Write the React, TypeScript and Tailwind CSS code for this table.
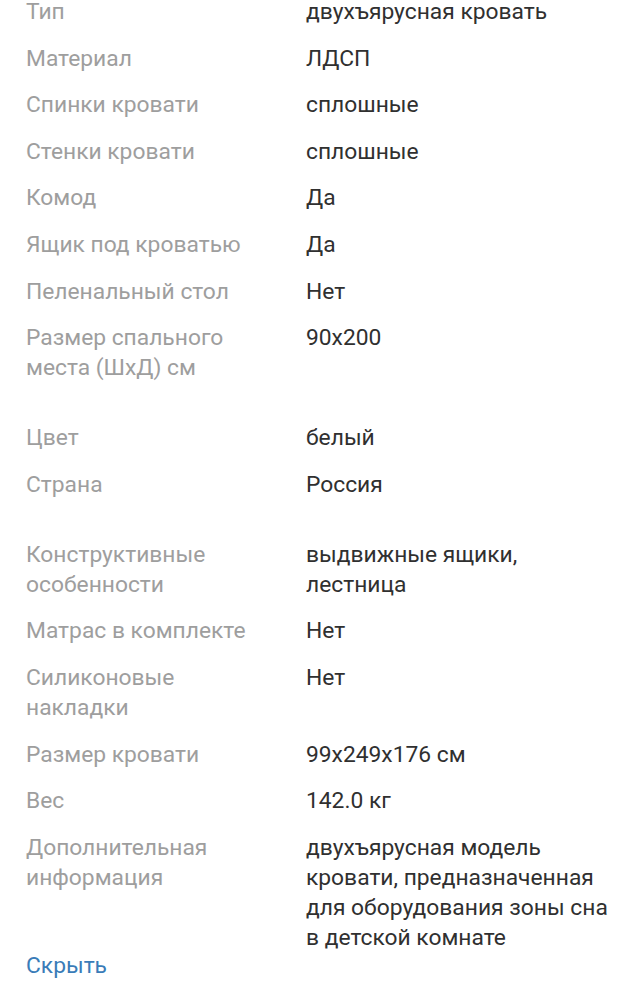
type Row = { label: string; value: string };

const groups: Row[][] = [
  [
    { label: "Тип", value: "двухъярусная кровать" },
    { label: "Материал", value: "ЛДСП" },
    { label: "Спинки кровати", value: "сплошные" },
    { label: "Стенки кровати", value: "сплошные" },
    { label: "Комод", value: "Да" },
    { label: "Ящик под кроватью", value: "Да" },
    { label: "Пеленальный стол", value: "Нет" },
    { label: "Размер спального места (ШхД) см", value: "90x200" },
  ],
  [
    { label: "Цвет", value: "белый" },
    { label: "Страна", value: "Россия" },
  ],
  [
    { label: "Конструктивные особенности", value: "выдвижные ящики, лестница" },
    { label: "Матрас в комплекте", value: "Нет" },
    { label: "Силиконовые накладки", value: "Нет" },
    { label: "Размер кровати", value: "99x249x176 см" },
    { label: "Вес", value: "142.0 кг" },
    {
      label: "Дополнительная информация",
      value:
        "двухъярусная модель кровати, предназначенная для оборудования зоны сна в детской комнате",
    },
  ],
];

function SpecRow({ label, value }: Row) {
  return (
    <div className="grid grid-cols-[280px_1fr]">
      <div className="max-w-[236px] text-[#9e9e9e]">{label}</div>
      <div className="text-[#303030]">{value}</div>
    </div>
  );
}

export default function App() {
  return (
    <div className="min-h-[1001px] bg-white pl-[26px] pr-[32px] font-['Roboto',sans-serif] text-[22.8px] leading-[30px] overflow-hidden">
      <div className="-mt-[3px] flex flex-col gap-[40px]">
        {groups.map((group, i) => (
          <div key={i} className="flex flex-col gap-[16.6px]">
            {group.map((row) => (
              <SpecRow key={row.label} {...row} />
            ))}
          </div>
        ))}
      </div>
      <button className="-mt-[2px] block text-[#3a7cb8]">Скрыть</button>
    </div>
  );
}
